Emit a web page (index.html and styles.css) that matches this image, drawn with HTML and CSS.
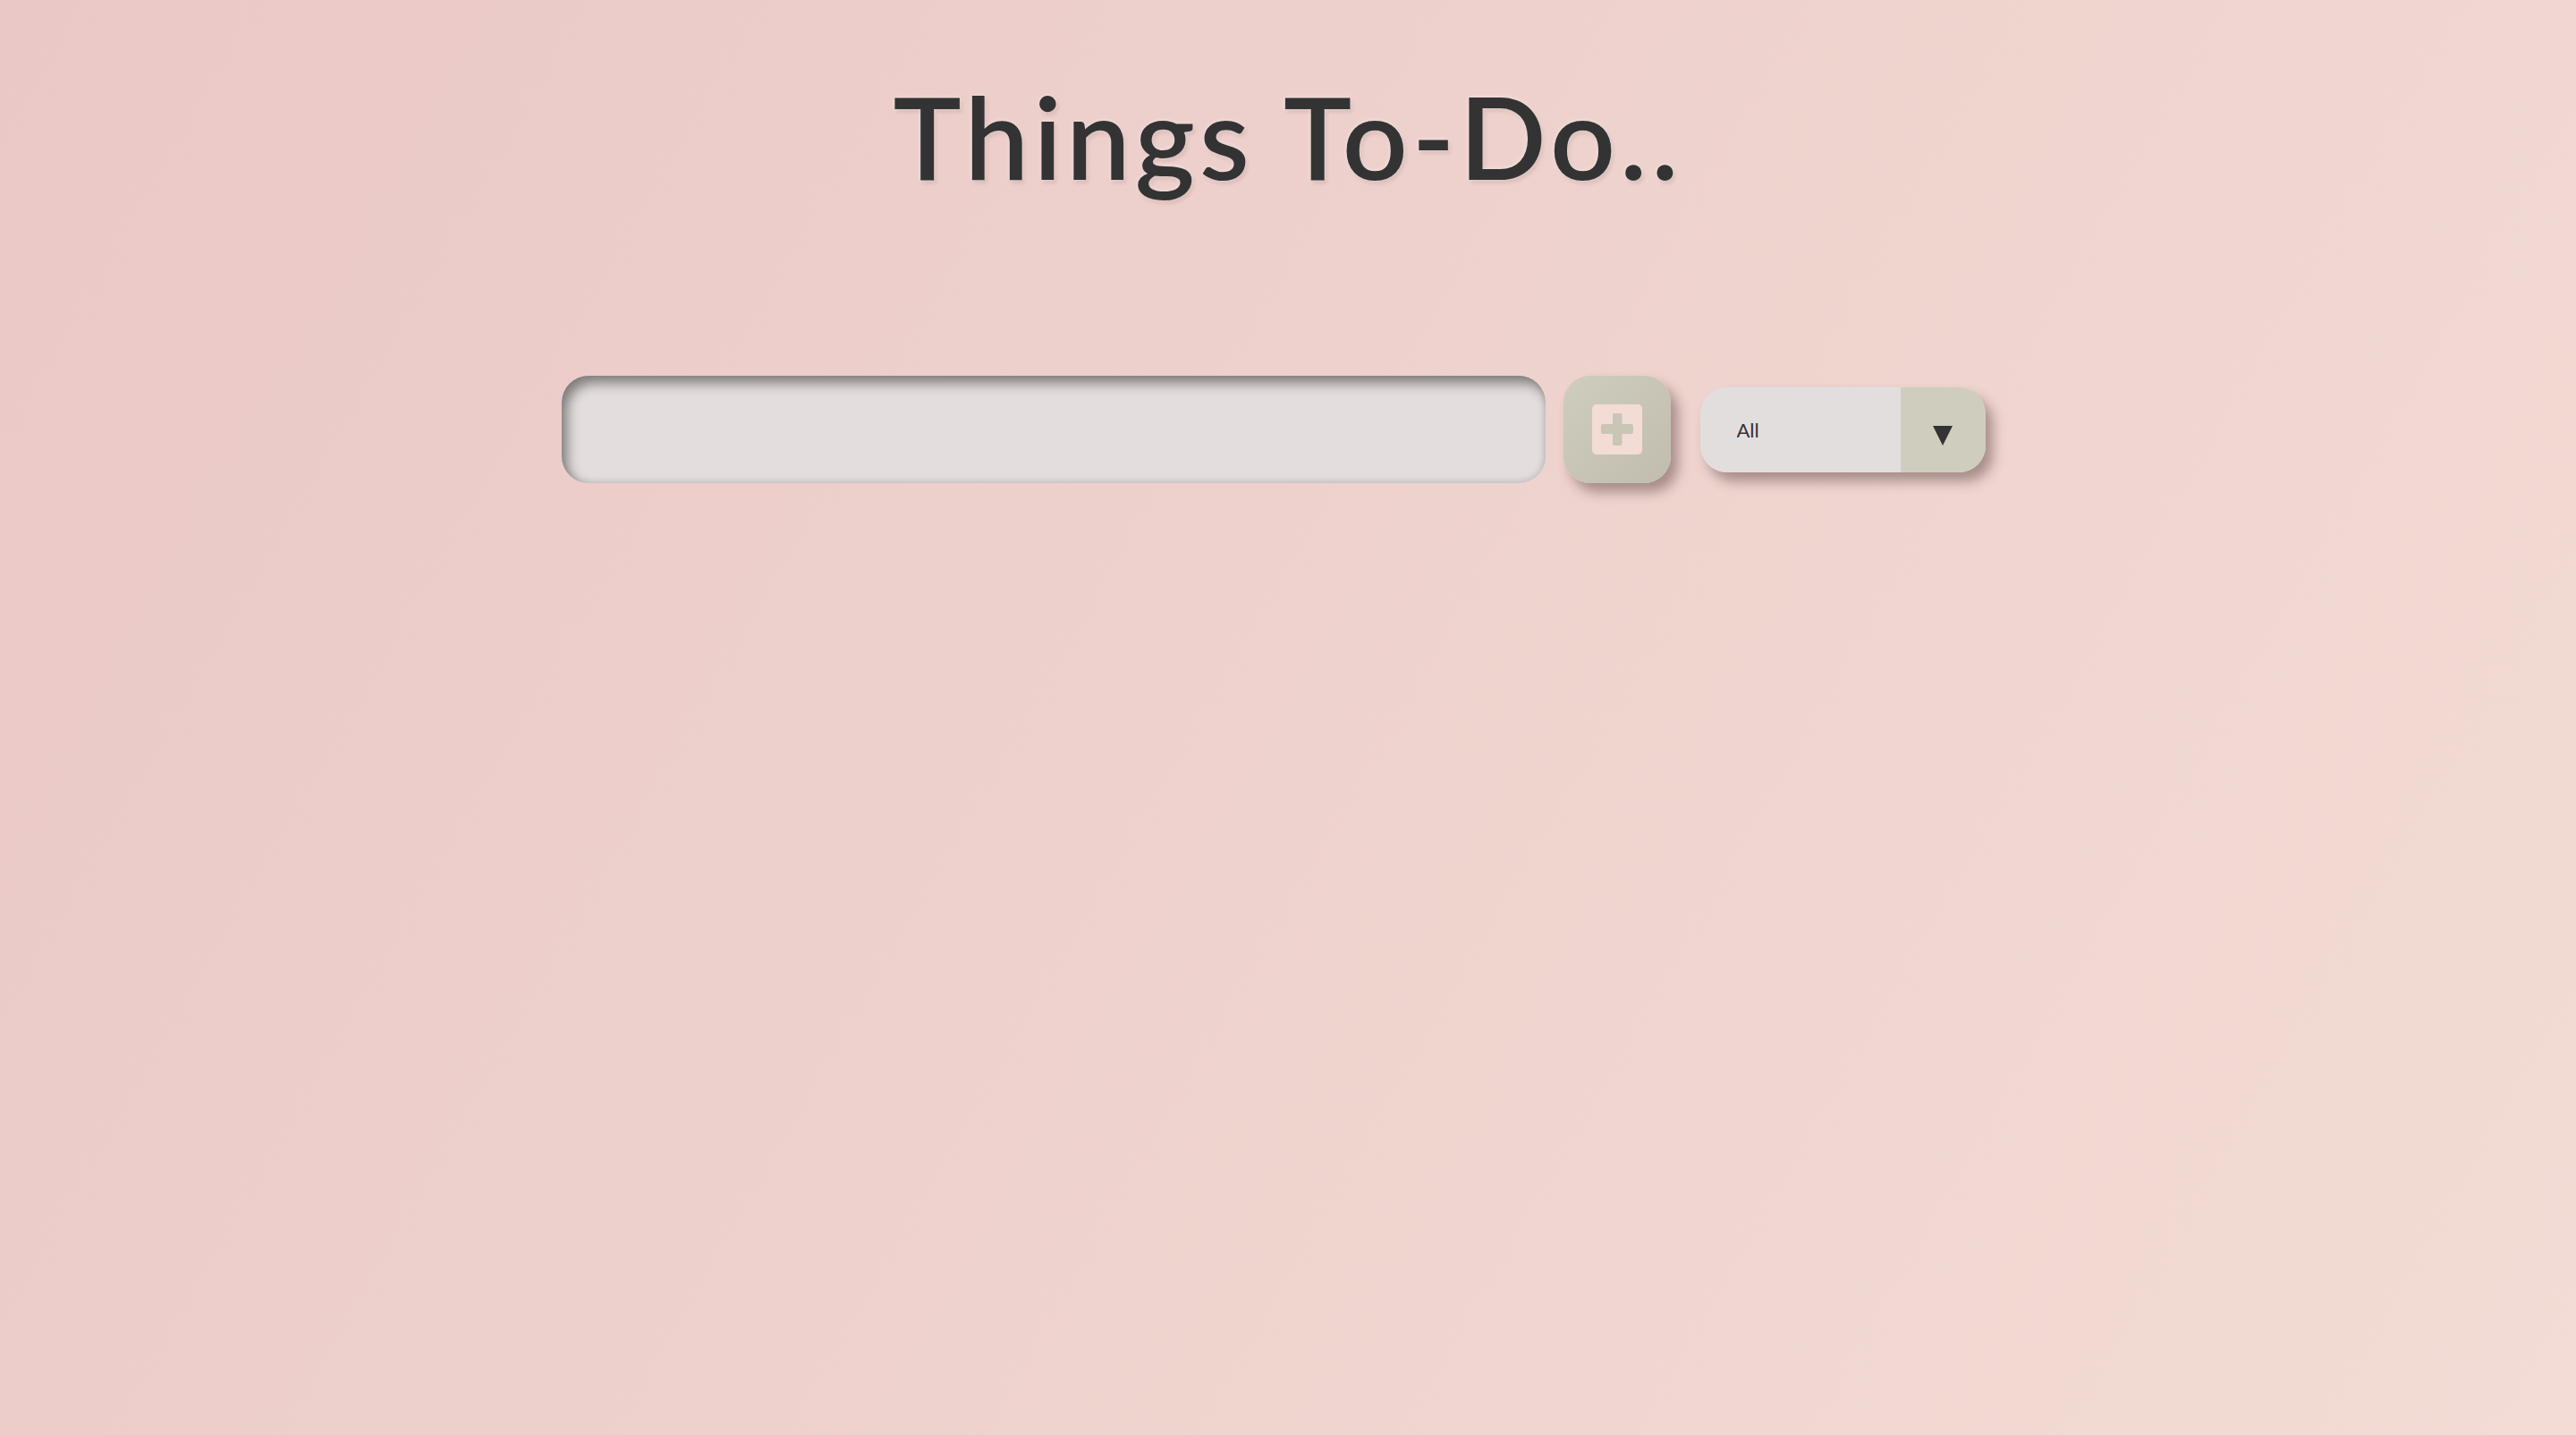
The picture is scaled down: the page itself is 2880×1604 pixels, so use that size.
FILE: index.html
```html
<!DOCTYPE html>
<html lang="en">
<head>
<meta charset="utf-8">
<title>Things To-Do</title>
<link rel="stylesheet" href="styles.css">
</head>
<body>
<header class="header">
  <h1 class="title">Things To-Do..</h1>
</header>
<form class="todo-form">
  <input type="text" class="todo-input" aria-label="New task">
  <button type="button" class="todo-button" aria-label="Add">
    <svg class="plus-icon" viewBox="0 0 56 56" width="56" height="56" aria-hidden="true">
      <rect x="0" y="0" width="56" height="56" rx="5" fill="#f3dcd6"/>
      <rect x="10" y="22" width="36" height="11" rx="2" fill="#c9c6b6"/>
      <rect x="23" y="10" width="10.5" height="36" rx="2" fill="#c9c6b6"/>
    </svg>
  </button>
  <div class="select">
    <select class="filter" aria-label="Filter">
      <option>All</option>
      <option>Completed</option>
      <option>Uncompleted</option>
    </select>
    <span class="select-arrow" aria-hidden="true">
      <svg viewBox="0 0 22 22" width="22" height="22"><polygon points="0,0 22,0 11,22" fill="#333"/></svg>
    </span>
  </div>
</form>
</body>
</html>
```
FILE: styles.css
```css
* { box-sizing: border-box; }

html, body {
  margin: 0;
  padding: 0;
  height: 100%;
}

body {
  min-height: 100vh;
  background: linear-gradient(120deg, #eac8c6 0%, #eed2cd 50%, #f3dcd5 100%);
  font-family: "Lato", "Noto Sans", sans-serif;
  color: #333;
}

.header {
  display: flex;
  justify-content: center;
  padding-top: 88px;
}

.title {
  margin: 0;
  font-family: "Lato", sans-serif;
  font-weight: 600;
  font-size: 128px;
  line-height: 1;
  letter-spacing: 5px;
  color: #333;
  text-shadow: 0 0 5px rgba(255, 255, 255, 0.55), 2px 3px 4px rgba(90, 50, 50, 0.18);
}

.todo-form {
  display: flex;
  justify-content: center;
  align-items: center;
  margin-top: 204px;
}

.todo-input {
  width: 1100px;
  height: 120px;
  border: none;
  outline: none;
  border-radius: 30px;
  background: #e3dedd;
  box-shadow: inset 6px 8px 14px rgba(0, 0, 0, 0.45), inset -2px -3px 6px rgba(0, 0, 0, 0.08);
  font-family: "Lato", sans-serif;
  font-size: 32px;
  padding: 0 40px;
}

.todo-button {
  width: 120px;
  height: 120px;
  margin-left: 20px;
  border: none;
  border-radius: 30px;
  background: linear-gradient(135deg, #cfcdbe 0%, #c1bdae 100%);
  box-shadow: 8px 10px 14px rgba(80, 55, 55, 0.45);
  display: flex;
  align-items: center;
  justify-content: center;
  padding: 0;
  cursor: pointer;
}

.plus-icon { display: block; }

.select {
  display: flex;
  width: 319px;
  height: 95px;
  margin-left: 33px;
  margin-right: 33px;
  border-radius: 30px;
  overflow: hidden;
  box-shadow: 8px 10px 14px rgba(80, 55, 55, 0.45);
}

.filter {
  appearance: none;
  -webkit-appearance: none;
  flex: 1;
  border: none;
  outline: none;
  background: #e3dede;
  padding: 0 0 0 41px;
  font-family: "Lato", sans-serif;
  font-size: 22px;
  color: #333;
  cursor: pointer;
}

.select-arrow {
  width: 95px;
  background: #cfcdbe;
  display: flex;
  align-items: center;
  justify-content: center;
  padding-top: 13px;
}

.select-arrow svg { display: block; }
```
